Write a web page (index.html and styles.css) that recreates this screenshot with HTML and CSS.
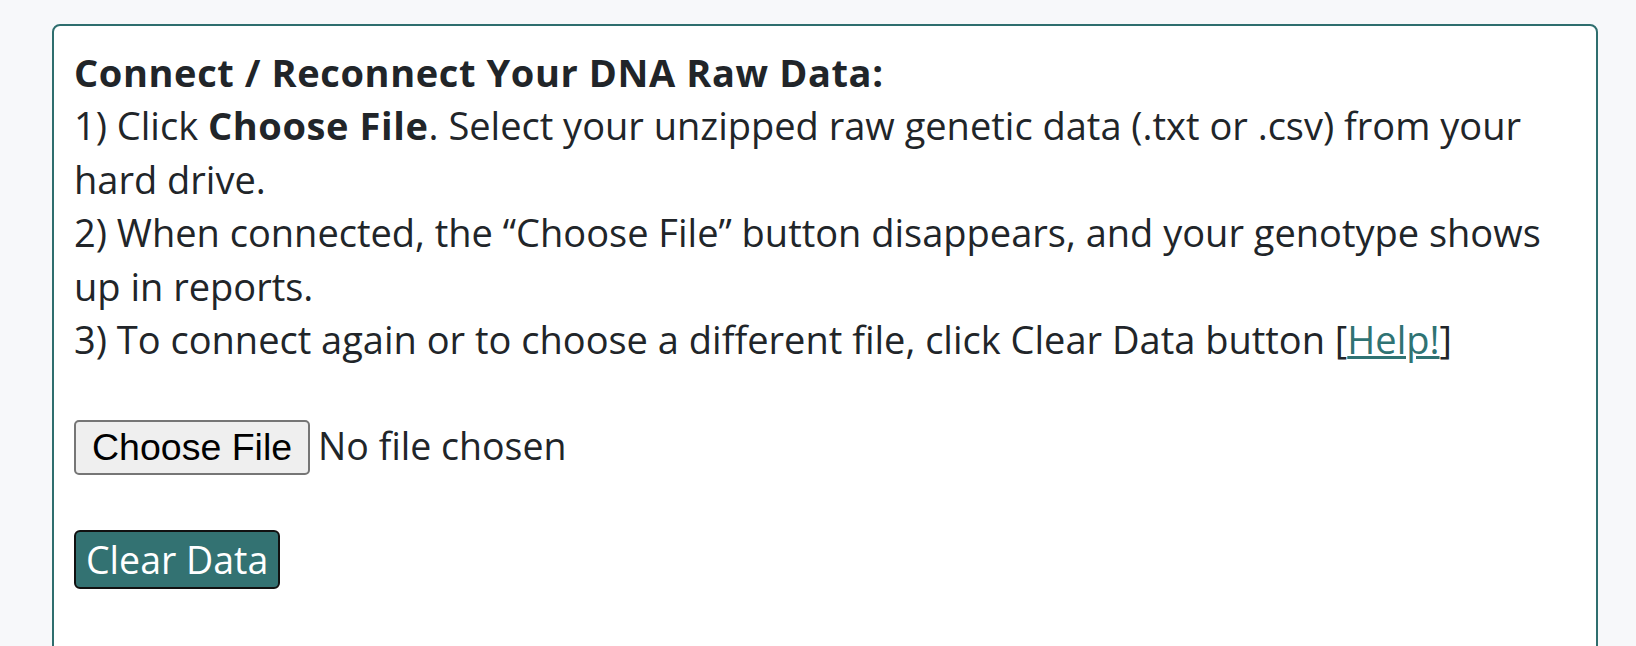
FILE: index.html
```html
<!DOCTYPE html>
<html lang="en">
<head>
  <meta charset="UTF-8" />
  <meta name="viewport" content="width=device-width, initial-scale=1.0" />
  <title>Connect DNA Raw Data</title>
  <link rel="stylesheet" href="styles.css">
</head>
<body>
  <div class="card">
    <p class="steps">
      <strong>Connect / Reconnect Your DNA Raw Data:</strong><br>
      1) Click <strong>Choose File</strong>. Select your unzipped raw genetic data (.txt or .csv) from your hard drive.<br>
      2) When connected, the &ldquo;Choose File&rdquo; button disappears, and your genotype shows up in reports.<br>
      3) To connect again or to choose a different file, click Clear Data button [<a href="#">Help!</a>]
    </p>

    <input type="file" id="rawData" class="file-input" accept=".txt,.csv" />

    <button class="clear-btn" id="clearData">Clear Data</button>
  </div>
</body>
</html>
```

FILE: styles.css
```css
body {
  margin: 0;
  background-color: #f7f8fa;
  font-family: "Open Sans", "Noto Sans", sans-serif;
  font-size: 38px;
  line-height: 53.4px;
  color: #212529;
}
.card {
  margin: 24px 38px 0 52px;
  min-height: 700px;
  padding: 20px 22px 60px 20px;
  background: #fff;
  border: 2px solid #2e6e6e;
  border-radius: 8px;
}
.steps {
  margin: 0;
}
.steps strong {
  letter-spacing: 0.6px;
}
.steps a {
  color: #2f7373;
}
.file-input {
  display: block;
  margin-top: 54px;
  font-family: "Open Sans", "Noto Sans", sans-serif;
  font-size: 37.5px;
  color: #212529;
}
.file-input::file-selector-button {
  font-family: "Liberation Sans", Arial, sans-serif;
  font-size: 37.5px;
  color: #000;
  background: #efefef;
  border: 2px solid #767676;
  border-radius: 5px;
  padding: 4px 16px 4px 16px;
  margin-right: 8px;
}
.clear-btn {
  display: block;
  margin-top: 55px;
  font-family: "Open Sans", "Noto Sans", sans-serif;
  font-size: 37.5px;
  line-height: 51px;
  color: #fff;
  background-color: #337272;
  border: 2px solid #111;
  border-radius: 6px;
  padding: 2px 10px;
  cursor: pointer;
}
```
